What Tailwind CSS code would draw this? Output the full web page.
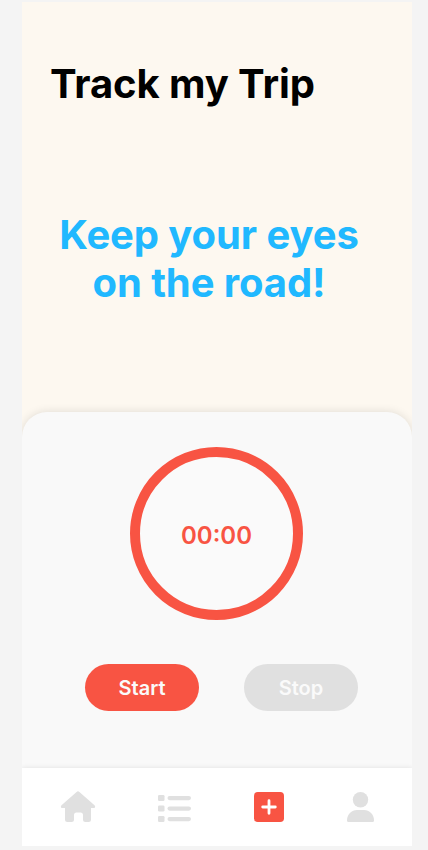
<!DOCTYPE html>
<html lang="en">
<head>
<meta charset="utf-8">
<title>Track my Trip</title>
<script src="https://cdn.jsdelivr.net/npm/@tailwindcss/browser@4"></script>
</head>
<body class="h-[850px] overflow-hidden bg-[#f4f4f4] pt-0.5 font-['Inter',sans-serif]">
<div class="ml-[22px] flex h-[844px] w-[390px] flex-col overflow-hidden bg-[#fdf8f0]">
  <header class="h-[410px] shrink-0 pt-[58px]">
    <h1 class="pl-7 text-[40px] leading-[48px] font-bold tracking-[-0.1px] text-black">Track my Trip</h1>
    <p class="mt-[103px] pr-4 text-center text-[40px] leading-[48px] font-bold tracking-[-0.1px] text-[#20b8ff]">Keep your eyes<br>on the road!</p>
  </header>
  <main class="flex h-[356px] shrink-0 flex-col items-center rounded-t-[25px] bg-[#f9f9f9] pt-[35px] shadow-[0_0_10px_rgba(0,0,0,0.12)]">
    <div class="mr-px flex size-[173px] items-center justify-center rounded-full border-10 border-[#f85443] bg-[#fafafa] pt-1 text-2xl font-semibold text-[#f85443]">00:00</div>
    <div class="mt-11 flex w-full gap-[45px] pl-[63px]">
      <button class="h-[47px] w-[114px] rounded-full bg-[#f85443] text-xl font-semibold text-[#fafafa]">Start</button>
      <button class="h-[47px] w-[114px] rounded-full bg-[#e0e0e0] text-xl font-semibold text-[#fafafa]">Stop</button>
    </div>
  </main>
  <nav class="relative flex h-[78px] shrink-0 items-start bg-white pt-[22px] pl-[38px] text-[#e0e0e0] shadow-[0_0_5px_rgba(0,0,0,0.1)]">
    <svg class="mt-px h-[31px] w-9" viewBox="0 1 36 31" fill="currentColor"><path d="M16.600 2a2 2 0 0 1 2.800 0L34.500 15.300c1.200 1.100.7 2.700-1 2.700H31v11.500a2.500 2.500 0 0 1-2.500 2.500h-3a2.500 2.500 0 0 1-2.500-2.500V25a2.500 2.500 0 0 0-2.500-2.500h-4A2.500 2.500 0 0 0 14 25v4.500A2.500 2.500 0 0 1 11.500 32h-4A2.500 2.500 0 0 1 5 29.500V18H2.500c-1.700 0-2.200-1.600-1-2.700z"/></svg>
    <svg class="ml-[61px] h-8 w-[34px]" viewBox="0 0 34 32" fill="currentColor"><rect x="1" y="5" width="6.500" height="6" rx="1.300"/><rect x="1" y="15.500" width="6.500" height="6" rx="1.300"/><rect x="1" y="26" width="6.500" height="6" rx="1.300"/><rect x="10.500" y="6" width="23.500" height="4.200" rx="2.100"/><rect x="10.500" y="16.500" width="23.500" height="4.200" rx="2.100"/><rect x="10.500" y="27" width="23.500" height="4.200" rx="2.100"/></svg>
    <svg class="mt-0.5 ml-[63px] size-[30px]" viewBox="0 0 30 30"><rect width="30" height="30" rx="3.800" fill="#f85443"/><path d="M15 8.700v12.600M8.700 15h12.600" stroke="white" stroke-width="2.800" stroke-linecap="round"/></svg>
    <svg class="mt-0.5 ml-[63px] h-[30px] w-7" viewBox="0 0 28 30" fill="currentColor"><circle cx="13.500" cy="7.700" r="7.700"/><path d="M0 28.500c0-6.300 4.500-10.500 10-10.500h7c5.500 0 10 4.200 10 10.500a1.500 1.500 0 0 1-1.500 1.500h-24A1.500 1.500 0 0 1 0 28.500z"/></svg>
  </nav>
</div>
</body>
</html>
